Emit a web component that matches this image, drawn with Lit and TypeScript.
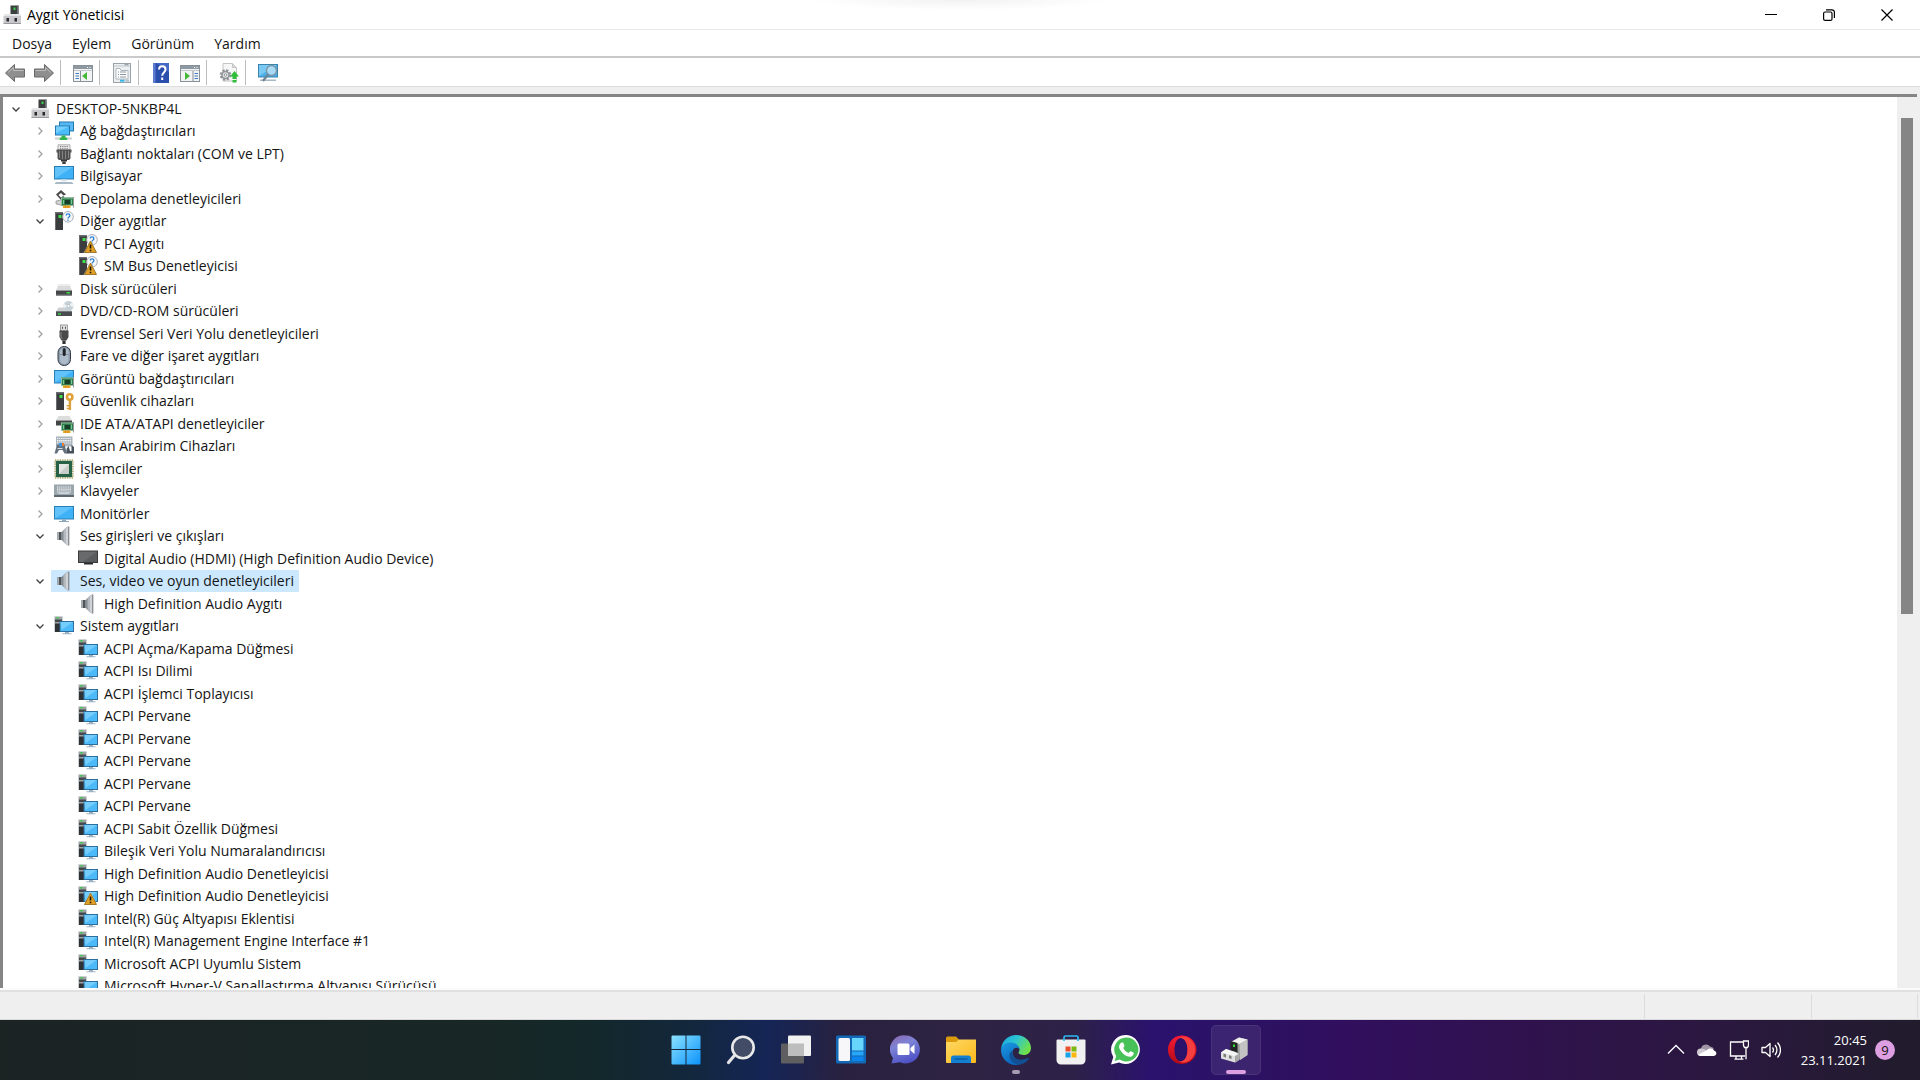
import { LitElement, html, css, svg, nothing, TemplateResult } from "lit";
import { customElement, state } from "lit/decorators.js";
import { classMap } from "lit/directives/class-map.js";

/* ---------- shared icon parts ---------- */

const frame = (body: unknown, size = 20, box = "0 0 20 20") => html`<svg
  width=${size}
  height=${size}
  viewBox=${box}
  aria-hidden="true"
>${body}</svg>`;

const warning = svg`
  <path d="M12.500 6L19.500 19H5.500z" fill="#fff" opacity=".7"/>
  <path d="M12.500 7L18.500 18.500H6.500z" fill="#e0a026" stroke="#8f6412" stroke-width=".8" stroke-linejoin="round"/>
  <path d="M12.500 10.500v4M12.500 15.700v1.600" stroke="#1c1400" stroke-width="1.600"/>`;

const card = svg`
  <rect x="7" y="8.500" width="12" height="8" fill="#2f7d4c"/>
  <path d="M7 8.500h12v1H8v7H7z" fill="#8fc3a0"/>
  <rect x="11" y="11" width="5" height="4" fill="#163d26"/>
  <path d="M9 11h1v4H9zM17 10.500h1v4.500h-1z" fill="#79c796"/>
  <rect x="9" y="16.500" width="7.500" height="2.500" fill="#f0a828"/>
  <path d="M11.500 16.500v2.500M14 16.500v2.500" stroke="#b87410" stroke-width=".6"/>
  <path d="M19.500 8v10.500" stroke="#9a9a9a"/>`;

const tower = svg`
  <rect x="1" y="1" width="8" height="18" fill="#3a3c3e"/>
  <path d="M1 1h8v1.500H2V19H1z" fill="#6a6d70"/>
  <rect x="4.500" y="4" width="3" height="3" fill="#3fe04a"/>`;

const systemDevice = svg`
  <rect x="0.500" y="0.500" width="8" height="15.500" fill="#9da2a5"/>
  <rect x="1" y="3.500" width="7" height="2.500" fill="#45494c"/>
  <rect x="1" y="7.500" width="5" height="8.500" fill="#2f3234"/>
  <rect x="2.500" y="1" width="2" height="1.500" fill="#27d63c"/>
  <rect x="5.500" y="5" width="14.500" height="11" fill="#2d6f9c"/>
  <path d="M6.500 6h12.500v9H6.500z" fill="#4cbaf8"/>
  <path d="M6.500 6h12.500L7.500 14z" fill="#74cdfb"/>
  <path d="M11 16h4v1.300h2.500v1H8.500v-1H11z" fill="#9db2c2"/>`;

const screen = svg`
  <rect x="0" y="1" width="20" height="13.500" fill="#2a7fb5"/>
  <rect x="1" y="2" width="18" height="11.500" fill="#3fb2f7"/>
  <path d="M1 2h18L1 13.500z" fill="#62c3fa"/>`;

const speaker = svg`
  <path d="M3.500 6h4.500v8H3.500z" fill="#4f5459"/>
  <path d="M3.500 6h1.500v8H3.500z" fill="#a4abb1"/>
  <path d="M7 6.500L13.500 0.500v19L7 13.500z" fill="#858c92"/>
  <path d="M9.500 4.200l4-3.700v19l-4-3.700z" fill="#b4babf"/>
  <path d="M12 2l3-1.500v19L12 18z" fill="#d0d4d7"/>
  <path d="M14.300.5h1v19h-1z" fill="#6b7278"/>`;

const hub = svg`
  <rect x="8.500" y="0.500" width="8" height="10" fill="#3b3f3f"/>
  <path d="M15 .5h1.500v10H15z" fill="#6b6f6f"/>
  <rect x="11.500" y="2.500" width="2" height="2.500" fill="#3bd04d"/>
  <path d="M3 9h14.500l1.500 2v8H1.500v-8z" fill="#c9c9cc"/>
  <path d="M3 9h14.500l1.500 2H1.500z" fill="#e6e6e8"/>
  <path d="M1.500 18H19v1H1.500z" fill="#99999d"/>
  <rect x="4.500" y="13" width="2.500" height="3.500" fill="#2a2a2c"/>
  <rect x="12.500" y="13" width="2.500" height="3.500" fill="#2a2a2c"/>`;

const keys = (y: number) => svg`<path d="M3 ${y}h14M3 ${y + 2}h14" stroke="#f5f7f8" stroke-width="1" stroke-dasharray="1.300 .8"/>`;

const other = svg`${tower}
  <circle cx="14" cy="5.800" r="5.300" fill="#f4f6f8" stroke="#a8b0b6"/>
  <path d="M12.200 4.500c0-2.300 3.700-2.300 3.700 0 0 1.400-1.900 1.400-1.900 3M14 8.500v1.300" fill="none" stroke="#2a7fd0" stroke-width="1.300"/>`;

const deviceIcons: Record<string, unknown> = {
  hub,
  network: svg`
    <rect x="5" y="0.500" width="15" height="10" fill="#2277ad"/><rect x="6" y="1.500" width="13" height="8" fill="#56b9f5"/>
    <rect x="1" y="4.500" width="15" height="10" fill="#2277ad"/><rect x="2" y="5.500" width="13" height="8" fill="#4bbcfa"/>
    <path d="M2 5.500h13L2 12z" fill="#74cffc"/>
    <path d="M7.500 14.500h4v2h2v2.500h-8v-2.500h2z" fill="#34b450"/>
    <path d="M1 16.500h4.500v2H1zM13.500 16.500H18v2h-4.500z" fill="#c9d2cc"/>`,
  port: svg`
    <path d="M4 .8h12v5H4z" fill="#ececec" stroke="#9a9a9a" stroke-width=".8"/>
    <path d="M6 2.500h8M6 4.300h8" stroke="#777" stroke-dasharray="1.200 1"/>
    <path d="M2.500 5.500h15v3h-1v6l-1.500 1.500H5l-1.500-1.500v-6h-1z" fill="#505050"/>
    <path d="M5.500 7v7M8.500 7v8M11.500 7v8M14.500 7v7" stroke="#858585" stroke-width="1"/>
    <rect x="7" y="16" width="6" height="1.500" fill="#333"/><rect x="8.300" y="17.500" width="3.400" height="2.500" fill="#3a3a3a"/>`,
  computer: svg`<g transform="translate(0 -1)">${screen}
    <path d="M7 14.500h6v2H7z" fill="#dbe4ea"/><path d="M2 17h16l1.500 2H.5z" fill="#a8b9c7"/></g>`,
  storage: svg`
    <path d="M2 5.500L7 1l5 4.500-2.500 1L7 4 4.500 6 7 8.500l2-1.500 1.500 1L7 11z" fill="#4a4a4a"/>
    <path d="M2 12l5-1 5 3v3l-10-2z" fill="#d0d0d0" stroke="#7b7b7b" stroke-width=".6"/>${card}`,
  other,
  otherWarning: svg`${other}${warning}`,
  disk: svg`
    <path d="M4.500 5.500h11L18 11.500H2z" fill="#dadbdc"/><path d="M4.500 5.500h11l.6 1.500H4z" fill="#ececec"/>
    <rect x="2" y="11.500" width="16" height="5" fill="#454749"/><rect x="2" y="15.500" width="16" height="1" fill="#75787a"/>
    <rect x="12.500" y="13" width="3.500" height="1.500" fill="#36dd45"/>`,
  dvd: svg`
    <path d="M4.500 6.500h11L18 10.500H2z" fill="#cdd0d2"/>
    <circle cx="14.500" cy="5" r="5" fill="#c5d0d7"/><path d="M14.500 5L18 1.500A5 5 0 0 1 19.500 6zM14.500 5L10 7A5 5 0 0 1 10 3z" fill="#eef3f5"/><circle cx="14.500" cy="5" r="1.500" fill="#fff" stroke="#9daab3" stroke-width=".6"/>
    <path d="M2 10h16v5H2z" fill="#4a4d4f"/><path d="M2 10h16v1H2z" fill="#777a7c"/><rect x="4" y="12.300" width="3" height="1.400" fill="#36dd45"/>`,
  usb: svg`
    <rect x="6.500" y="1" width="7" height="6" fill="#dcdcdc" stroke="#8b8b8b" stroke-width=".8"/>
    <path d="M8.500 2.800v2M11.500 2.800v2" stroke="#555"/>
    <path d="M5.500 6.500h9v6.500l-2 3.500h-5l-2-3.500z" fill="#48494b"/><path d="M7 8v5l1 2" stroke="#858688" fill="none"/>
    <rect x="8.400" y="16.500" width="3.200" height="3.500" fill="#333"/>`,
  mouse: svg`
    <rect x="4" y="0.500" width="12.500" height="19" rx="6" fill="#8d9dad" stroke="#333a42"/>
    <rect x="6" y="2" width="8.500" height="16" rx="4.200" fill="#aebcc9"/>
    <path d="M6 8.500h8.500" stroke="#6e7d8b" stroke-width=".7"/>
    <rect x="8.700" y="2" width="3" height="8" rx="1.500" fill="#1e2328"/>`,
  display: svg`${screen}${card}`,
  security: svg`
    <g transform="translate(1 0)">${tower}</g>
    <circle cx="15.700" cy="6" r="2.700" fill="none" stroke="#dfa23b" stroke-width="2.600"/>
    <path d="M14.700 9h2.400v10h-2.400zM12.700 14h2v1.500h-2zM12.700 16.800h2v1.500h-2z" fill="#dba03c"/>`,
  ide: svg`
    <path d="M4.500 2h11L18 6.500H2z" fill="#dcdddd"/><rect x="2" y="6.500" width="16" height="5" fill="#434547"/>${card}`,
  hid: svg`
    <rect x="2" y="0.500" width="16.500" height="10" fill="#a9b4bc"/>${keys(2.5)}${keys(5)}
    <path d="M3 8.500h7.500l2.500 9h-2.500l-2-3.500H5L3 17.500H.5z" fill="#64707c"/>
    <rect x="5" y="7" width="3" height="3.500" fill="#3f93e0"/><path d="M8 7h2v3H8z" fill="#f07b24"/>
    <path d="M12.500 17.500V13l2-3 1.500 5h1.500V9l2.500 2v6.500h-5z" fill="#46515c"/>
    <path d="M3.500 12.500h5" stroke="#d9dfe4"/>`,
  cpu: svg`
    <rect x="1" y="1" width="18" height="18" fill="none" stroke="#b3a35c" stroke-width="1.500" stroke-dasharray="1.200 1.200"/>
    <rect x="1.800" y="1.800" width="16.400" height="16.400" fill="#286246"/>
    <rect x="5" y="5" width="10" height="10" fill="#e3e6e4"/><path d="M5 15L15 5v10z" fill="#c8cdca"/>`,
  keyboard: svg`
    <rect x="0" y="3.500" width="20" height="12.500" fill="#9aa5ac"/><rect x="0" y="14" width="20" height="2" fill="#5d6870"/>
    ${keys(6)}${keys(9)}<path d="M4.500 12.200h11" stroke="#e7ebed"/>`,
  monitor: svg`<g transform="translate(0 1)">${screen}<path d="M8 14.500h4V16h3v1H5v-1h3z" fill="#8ea7b9"/></g>`,
  speaker,
  darkMonitor: svg`
    <rect x="0" y="1.500" width="20" height="12.500" fill="#38393a"/><rect x="1" y="2.500" width="18" height="10.500" fill="#686a6b"/>
    <path d="M19 2.500V13H5z" fill="#595b5c"/><path d="M6 14h9v1.500H6z" fill="#2a2a2a"/>`,
  system: systemDevice,
  systemWarning: svg`${systemDevice}${warning}`,
};

/* ---------- toolbar icons ---------- */

const panelWindow = svg`
  <rect x="0.500" y="2.500" width="19" height="16" fill="#f3f3f3" stroke="#87929b"/>
  <rect x="1" y="3" width="18" height="3" fill="#8d98a1"/><path d="M14 4.500h1M16.500 4.500h1" stroke="#fff"/>
  <path d="M1 7.500h18" stroke="#c3cacf"/>`;

const arrow = svg`
  <path d="M.5 10L9.500 1.500V6H19.500v8H9.500v4.500z" fill="#8f8f8f" stroke="#696969" stroke-linejoin="round"/>
  <path d="M3 9.500l5.500-5V7.500H18.500" fill="none" stroke="#bdbdbd"/>`;

const toolbarIcons: Record<string, unknown> = {
  back: arrow,
  forward: svg`<g transform="matrix(-1 0 0 1 20 0)">${arrow}</g>`,
  tree: svg`${panelWindow}
    <path d="M7.500 8v10" stroke="#87929b"/><path d="M2.500 10.500h3.500M2.500 13h3.500M2.500 15.500h3.500" stroke="#3c7fc0"/>
    <path d="M14 9v8l-5-4z" fill="#46b83a"/>`,
  properties: svg`
    <rect x="1.500" y="0.500" width="17" height="19" fill="#eceff1" stroke="#9aa3aa"/>
    <path d="M2 3h16" stroke="#c1c7cc"/><path d="M12.500 1.800h4" stroke="#7e8991"/>
    <path d="M4 5.500h4l1 2h7v8.500H4z" fill="#fff" stroke="#a6afb5" stroke-width=".9"/>
    <path d="M6 9h1M8 9h6M6 11.500h1M8 11.500h6M6 14h1M8 14h6" stroke="#8896a3"/>
    <rect x="8" y="16.700" width="4.500" height="2" fill="#35b9e8"/><rect x="13.500" y="16.700" width="3.500" height="2" fill="#b8c1c7"/>`,
  help: svg`
    <rect x="2" y="0" width="16" height="20" fill="#2c4fae"/><rect x="2" y="0" width="2.500" height="20" fill="#5d7cd0"/>
    <path d="M5 0h13v9z" fill="#4569c6"/>
    <path d="M8 6.500c0-4.500 6.500-4.500 6.500 0 0 3-3.300 3-3.300 6.300M11.200 14.500v2.500" fill="none" stroke="#fff" stroke-width="2"/>`,
  action: svg`${panelWindow}
    <path d="M13 8v10" stroke="#87929b"/><path d="M14.500 10.500H18M14.500 13H18M14.500 15.500H18" stroke="#3c7fc0"/>
    <path d="M5 9v8l5-4z" fill="#46b83a"/>`,
  update: svg`
    <path d="M4 .5h9.500l4 4V18H4z" fill="#f6f6f6" stroke="#c4c4c4"/><path d="M13.500.5v4h4" fill="#dadada" stroke="#c4c4c4"/>
    <circle cx="6.500" cy="12" r="4.700" fill="none" stroke="#8f9498" stroke-width="2.200" stroke-dasharray="2.200 1.500"/>
    <circle cx="6.500" cy="12" r="3.500" fill="#e5e6e7" stroke="#8f9498" stroke-width="1.500"/><circle cx="6.500" cy="12" r="1.300" fill="#fff" stroke="#8f9498"/>
    <path d="M15.500 8l4.500 5.500h-2.500V16h-4v-2.500H11z" fill="#2fbf3a"/><path d="M13.500 17h4v2.500h-4z" fill="#2fbf3a"/>`,
  scan: svg`
    <rect x="0.500" y="1.500" width="19" height="12.500" fill="#49b0ea" stroke="#3c84ae"/><path d="M1 2h18L1 13z" fill="#79c9f3"/>
    <path d="M2 16.500h16v1.500H2z" fill="#aab8c2"/>
    <circle cx="13.500" cy="7.500" r="5" fill="#b9e2f8" fill-opacity=".85" stroke="#7a93a4" stroke-width="1.300"/>
    <path d="M10 11.500L5 18" stroke="#6c8496" stroke-width="2.200"/>`,
};

/* ---------- taskbar icons, 32 x 32 ---------- */

const taskIcons: Record<string, unknown> = {
  start: svg`
    <defs><linearGradient id="st" x1="0" y1="0" x2="1" y2="1"><stop offset="0" stop-color="#8be2ff"/><stop offset="1" stop-color="#0c93fb"/></linearGradient></defs>
    <path d="M2.500 1.500h13v13.500H1.500v-12.500a1 1 0 0 1 1-1zM16.500 1.500h13a1 1 0 0 1 1 1V15H16.500zM1.500 16h14v14.500h-13a1 1 0 0 1-1-1zM16.500 16h14v13.500a1 1 0 0 1-1 1h-13z" fill="url(#st)"/>`,
  search: svg`
    <path d="M9 22L3.500 28.500" stroke="#e4e4e6" stroke-width="3.200" stroke-linecap="round"/>
    <circle cx="18" cy="13.500" r="10.700" fill="#434c66" stroke="#e9e9ea" stroke-width="2.600"/>`,
  taskView: svg`
    <rect x="1" y="9.500" width="23" height="20" rx="1" fill="#5f5f62"/>
    <rect x="8" y="1.500" width="23" height="20.500" rx="1" fill="#f2f2f2"/>
    <path d="M8 9.500h16V22H8z" fill="#bdbdbd"/>`,
  widgets: svg`
    <rect x="1" y="1.500" width="30" height="28" rx="1.500" fill="#1469b6"/>
    <rect x="3.500" y="4" width="11.500" height="23" rx="1.500" fill="#f7f7f9"/>
    <path d="M17 4h11.500v12.500H17z" fill="#68d5fd"/><path d="M17 17.500h11.500v4H17z" fill="#27a7f7"/><path d="M17 22.500h11.500V27H17z" fill="#0b84ec"/>`,
  chat: svg`
    <defs><linearGradient id="ch" x1="0.200" y1="0" x2="0.600" y2="1"><stop offset="0" stop-color="#8c6bb4"/><stop offset=".35" stop-color="#7d83d6"/><stop offset="1" stop-color="#4c4fc4"/></linearGradient></defs>
    <path d="M16 1.500a14 14 0 1 1-6 26.700L1.500 29.500 3 24A14 14 0 0 1 16 1.500z" fill="url(#ch)"/>
    <rect x="7.500" y="9.500" width="12" height="11.500" rx="1.500" fill="#fff"/><path d="M20.500 14l4-3.500v9.500l-4-3.500z" fill="#fff"/>`,
  explorer: svg`
    <defs><linearGradient id="ex" x1="0" y1="0" x2="1" y2="1"><stop offset="0" stop-color="#ffd964"/><stop offset="1" stop-color="#fbb81c"/></linearGradient></defs>
    <path d="M1 4a1.500 1.500 0 0 1 1.500-1.500H11l3 3V12H1z" fill="#dc9b0d"/>
    <path d="M1 8h10l3-2.500h17V28a1 1 0 0 1-1 1H2a1 1 0 0 1-1-1z" fill="url(#ex)"/>
    <path d="M6 29v-5a2.500 2.500 0 0 1 2.500-2.500h15A2.500 2.500 0 0 1 26 24v5z" fill="#1480d3"/><path d="M9.500 25h13" stroke="#0b5694" stroke-width="1.200"/>`,
  edge: svg`
    <defs>
      <linearGradient id="e1" x1="0" y1="0" x2="1" y2=".5"><stop offset="0" stop-color="#1aa3e4"/><stop offset=".5" stop-color="#2cc5d0"/><stop offset="1" stop-color="#6fe04c"/></linearGradient>
      <linearGradient id="e2" x1="0" y1="0" x2=".5" y2="1"><stop offset="0" stop-color="#1a9be4"/><stop offset="1" stop-color="#0b62b8"/></linearGradient>
    </defs>
    <path d="M1.200 14.500C2 6.500 8.500 1 16 1c8.500 0 15 6 15 13 0 4.500-3.500 7-7 7-3.500 0-5.500-1-5.500-2.200 0-.8 1-1.300 1-3.300 0-2.600-2.700-5-6.500-5-5 0-9.800 1.500-11.800 4z" fill="url(#e1)"/>
    <path d="M1 16c0-4.500 4.500-7.500 9.500-7.500 5.200 0 9 3.200 9 7-1-2.500-6-2.500-6.800 1.500-1 6 5 11 10.800 10.500C21 30 18 31 15.500 31 7.500 31 1 24 1 16z" fill="url(#e2)"/>
    <path d="M12.700 16.500c-1.700 6.500 4.500 12 15.300 7.500.8-.3 1.200.2.700.9-2.200 3.300-5.700 5.200-9.200 5.800C12.500 30 9 25.500 9.500 21c.3-2.200 1.500-3.700 3.200-4.500z" fill="#124f93"/>`,
  store: svg`
    <path d="M1.500 6.500a1 1 0 0 1 1-1h27a1 1 0 0 1 1 1V26a4.500 4.500 0 0 1-4.500 4.500H6A4.500 4.500 0 0 1 1.500 26z" fill="#f1f1f2"/>
    <path d="M9 7V3.500A1.500 1.500 0 0 1 10.500 2h11A1.500 1.500 0 0 1 23 3.500V7" fill="none" stroke="#2cb8f0" stroke-width="1.700"/>
    <path d="M10.500 12.500h5v5h-5z" fill="#e8502b"/><path d="M16.500 12.500h5v5h-5z" fill="#7eb812"/><path d="M10.500 18.500h5v5h-5z" fill="#17a2ea"/><path d="M16.500 18.500h5v5h-5z" fill="#fbb80f"/>`,
  whatsapp: svg`
    <path d="M16.500 1A14.500 14.500 0 1 1 9 28.500L1 30.500l2.300-7.500A14.500 14.500 0 0 1 16.500 1z" fill="#fff"/>
    <path d="M16.500 3.500A12 12 0 1 1 9.800 25.500L4.700 27l1.500-5A12 12 0 0 1 16.500 3.500z" fill="#48c258"/>
    <path d="M12.300 8.500c.5 0 .9 0 1.200.8l1 2.500c.2.600-1.200 1.700-1.200 2.200.8 2.200 2.800 4 5.200 4.900.7-.1 1.500-1.800 2.200-1.600l2.700 1.300c1 .5-.2 3.600-2.400 4.100-2 .5-5.500-.8-8-3.200s-4.200-5-3.900-7.200c.2-1.900 1.400-3.800 3.200-3.800z" fill="#fff"/>`,
  opera: svg`
    <defs><linearGradient id="op" x1="0" y1="0" x2="0" y2="1"><stop offset="0" stop-color="#fb1b34"/><stop offset="1" stop-color="#b00a17"/></linearGradient></defs>
    <path fill-rule="evenodd" d="M16 1.500A14.300 14.300 0 1 1 16 30a14.300 14.300 0 0 1 0-28.500zM16 4c-4 0-6.500 5-6.500 11.800S12 27.500 16 27.500s6.500-5 6.500-11.700S20 4 16 4z" fill="url(#op)"/>
    <path d="M14 4.300C17 1.500 23 3 26.500 6.500c5 5.500 5 13 0 18.500-3.500 3.500-9.500 5-12.500 2.200 5 1.300 8.500-4.200 8.500-11.400S19 3 14 4.300z" fill="#f6403f"/>`,
  devices: svg`
    <path d="M11 8l8-4.500 8.500 2V21L20 26l-9-4z" fill="#9b9b9b"/><path d="M11 8l8-4.500 8.500 2L19.500 10z" fill="#f0f0f0"/><path d="M19.500 10l8-4.500V21L20 26z" fill="#c3c3c3"/>
    <path d="M10.500 7l7 2v10.500l-7-3z" fill="#202322"/><rect x="13" y="10.500" width="2" height="2.500" fill="#36dc4c"/>
    <path d="M1 18.500l5-3.500 10 3 2.500 2v6.500L15 28.500 1 24.500z" fill="#dfdfdf"/><path d="M1 18.500l5-3.500 12.500 5-3.500 2z" fill="#f5f5f5"/><path d="M15 22l3.500-2v6.500L15 28.500z" fill="#a6a6a6"/>
    <path d="M3.500 19.500l2.500.8v3.200l-2.500-.8zM9 21.200l2.500.8v3l-2.500-.8z" fill="#7c7c7c"/>`,
};

/* ---------- data ---------- */

interface DeviceNode {
  name: string;
  icon: string;
  children?: DeviceNode[];
  open?: boolean;
}

const sys = (name: string, icon = "system"): DeviceNode => ({ name, icon });
const group = (name: string, icon: string): DeviceNode => ({ name, icon, children: [] });

const root: DeviceNode = {
  name: "DESKTOP-5NKBP4L",
  icon: "hub",
  open: true,
  children: [
    group("Ağ bağdaştırıcıları", "network"),
    group("Bağlantı noktaları (COM ve LPT)", "port"),
    group("Bilgisayar", "computer"),
    group("Depolama denetleyicileri", "storage"),
    {
      name: "Diğer aygıtlar",
      icon: "other",
      open: true,
      children: [sys("PCI Aygıtı", "otherWarning"), sys("SM Bus Denetleyicisi", "otherWarning")],
    },
    group("Disk sürücüleri", "disk"),
    group("DVD/CD-ROM sürücüleri", "dvd"),
    group("Evrensel Seri Veri Yolu denetleyicileri", "usb"),
    group("Fare ve diğer işaret aygıtları", "mouse"),
    group("Görüntü bağdaştırıcıları", "display"),
    group("Güvenlik cihazları", "security"),
    group("IDE ATA/ATAPI denetleyiciler", "ide"),
    group("İnsan Arabirim Cihazları", "hid"),
    group("İşlemciler", "cpu"),
    group("Klavyeler", "keyboard"),
    group("Monitörler", "monitor"),
    {
      name: "Ses girişleri ve çıkışları",
      icon: "speaker",
      open: true,
      children: [sys("Digital Audio (HDMI) (High Definition Audio Device)", "darkMonitor")],
    },
    {
      name: "Ses, video ve oyun denetleyicileri",
      icon: "speaker",
      open: true,
      children: [sys("High Definition Audio Aygıtı", "speaker")],
    },
    {
      name: "Sistem aygıtları",
      icon: "system",
      open: true,
      children: [
        sys("ACPI Açma/Kapama Düğmesi"),
        sys("ACPI Isı Dilimi"),
        sys("ACPI İşlemci Toplayıcısı"),
        sys("ACPI Pervane"),
        sys("ACPI Pervane"),
        sys("ACPI Pervane"),
        sys("ACPI Pervane"),
        sys("ACPI Pervane"),
        sys("ACPI Sabit Özellik Düğmesi"),
        sys("Bileşik Veri Yolu Numaralandırıcısı"),
        sys("High Definition Audio Denetleyicisi"),
        sys("High Definition Audio Denetleyicisi", "systemWarning"),
        sys("Intel(R) Güç Altyapısı Eklentisi"),
        sys("Intel(R) Management Engine Interface #1"),
        sys("Microsoft ACPI Uyumlu Sistem"),
        sys("Microsoft Hyper-V Sanallaştırma Altyapısı Sürücüsü"),
      ],
    },
  ],
};

/* ---------- device tree ---------- */

@customElement("device-tree")
class DeviceTree extends LitElement {
  @state() private selected: DeviceNode = root.children![17];

  static styles = css`
    :host { display: flex; min-height: 0; overflow: hidden; background: #fff; }
    svg { display: block; flex: none; }
    .list { flex: 1; min-width: 0; margin: 0; padding: 0; list-style: none; overflow: hidden; }
    .row { display: flex; align-items: center; height: 22px; padding-left: 1px; }
    .row:nth-child(odd) { height: 23px; }
    .level-1 { padding-left: 25px; }
    .level-2 { padding-left: 49px; }
    button { border: 0; background: none; font: inherit; color: inherit; padding: 0; }
    .toggle { display: grid; place-items: center; width: 23px; height: 22px; flex: none; }
    .spacer { width: 23px; flex: none; }
    .item { display: flex; align-items: center; gap: 6px; height: 22px; padding: 0 5px 0 3px; white-space: nowrap; border-radius: 1px; }
    .selected { background: #cce8ff; }
    .scrollbar { display: flex; flex-direction: column; align-items: center; width: 20px; flex: none; background: #efefef; padding-top: 21px; box-sizing: border-box; }
    .thumb { width: 12px; height: 57%; background: #858585; }
  `;

  private toggle(node: DeviceNode) {
    node.open = !node.open;
    this.requestUpdate();
  }

  private rows(node: DeviceNode, level: number): TemplateResult[] {
    const chevron = node.open
      ? svg`<path d="M2.500 4.500L6 8l3.500-3.500" fill="none" stroke="#404040" stroke-width="1.300"/>`
      : svg`<path d="M4.500 2.500L8 6 4.500 9.500" fill="none" stroke="#a0a0a0" stroke-width="1.300"/>`;
    const row = html`<li class="row level-${level}" role="treeitem" aria-level=${level + 1}
      aria-expanded=${node.children ? String(!!node.open) : nothing}>
      ${node.children
        ? html`<button class="toggle" aria-label=${node.name} @click=${() => this.toggle(node)}>${frame(chevron, 12, "0 0 12 12")}</button>`
        : html`<span class="spacer"></span>`}
      <button class=${classMap({ item: true, selected: node === this.selected })} @click=${() => (this.selected = node)}>
        ${frame(deviceIcons[node.icon])}<span>${node.name}</span>
      </button>
    </li>`;
    const below = node.open ? (node.children ?? []).flatMap((c) => this.rows(c, level + 1)) : [];
    return [row, ...below];
  }

  render() {
    return html`<ul class="list" role="tree">${this.rows(root, 0)}</ul>
      <div class="scrollbar"><div class="thumb"></div></div>`;
  }
}

/* ---------- taskbar ---------- */

@customElement("task-bar")
class TaskBar extends LitElement {
  static styles = css`
    :host {
      display: grid; grid-template-columns: 1fr auto 1fr; align-items: center; height: 60px; color: #fff;
      background: linear-gradient(92deg, #1b2323 0%, #182725 25%, #13282b 31%, #13273d 36%, #152556 40%, #29213f 44%,
        #2e2342 50%, #2d2148 56%, #2a126e 60%, #2c1263 65%, #310f5e 70%, #2f124c 80%, #2a183e 90%, #211c2c 100%);
    }
    svg { display: block; }
    button { border: 0; background: none; font: inherit; color: inherit; padding: 0; }
    .apps { grid-column: 2; display: flex; gap: 5px; padding-left: 1px; }
    .app { display: grid; place-items: center; position: relative; width: 50px; height: 50px; border-radius: 5px; box-sizing: border-box; }
    .active { background: #ffffff14; border: 1px solid #ffffff12; }
    .mark { position: absolute; bottom: 1px; left: 50%; transform: translateX(-50%); width: 8px; height: 4px; border-radius: 2px; background: #a79cb4; }
    .active .mark { width: 20px; bottom: 0; background: #dd9ee2; }
    .tray { display: flex; align-items: center; justify-content: flex-end; padding-right: 25px; }
    .tool { display: grid; place-items: center; width: 32px; height: 40px; }
    .clock { display: grid; text-align: right; font-size: 13px; line-height: 20px; margin: 0 8px 0 14px; }
    .badge { display: grid; place-items: center; width: 20px; height: 20px; border-radius: 50%; background: #dd9ee2; color: #111; font-size: 13px; line-height: 20px; }
  `;

  private apps: [string, string, string][] = [
    ["start", "Başlat", ""],
    ["search", "Ara", ""],
    ["taskView", "Görev Görünümü", ""],
    ["widgets", "Pencere öğeleri", ""],
    ["chat", "Sohbet", ""],
    ["explorer", "Dosya Gezgini", ""],
    ["edge", "Microsoft Edge", "running"],
    ["store", "Microsoft Store", ""],
    ["whatsapp", "WhatsApp", ""],
    ["opera", "Opera", ""],
    ["devices", "Aygıt Yöneticisi", "active"],
  ];

  render() {
    return html`
      <nav class="apps">
        ${this.apps.map(
          ([icon, label, status]) => html`<button class="app ${status}" aria-label=${label}>
            ${frame(taskIcons[icon], 32, "0 0 32 32")}${status ? html`<span class="mark"></span>` : nothing}
          </button>`
        )}
      </nav>
      <div class="tray">
        <button class="tool" aria-label="Gizli simgeler">${frame(svg`<path d="M3 13.500l8-8 8 8" fill="none" stroke="#fff" stroke-width="1.300"/>`)}</button>
        <button class="tool" aria-label="OneDrive">${frame(svg`
          <path d="M4 9a5 5 0 0 1 9-2.500A5 5 0 0 1 17 9l-8 3z" fill="#9e95a6"/>
          <path d="M3 16a3.800 3.800 0 0 1 .5-7.500c2 0 4 .5 6 2L2 16z" fill="#cfcad4"/>
          <path d="M1 15l9-5c3-2.500 6-1.500 7 .5 3.500 1 3 5.500-.5 5.500H3z" fill="#fff"/>`)}</button>
        <button class="tool" aria-label="Ağ">${frame(svg`
          <path d="M14 2H1.500v14H16M5.500 19.200h9M7 16v3M12.500 16v3" fill="none" stroke="#fff" stroke-width="1.300"/>
          <path d="M14.500 1h5v4.500l-1 2h-3l-1-2zM17 7.500v11.700" fill="#2a183e" stroke="#fff" stroke-width="1.300"/>`)}</button>
        <button class="tool" aria-label="Ses">${frame(svg`
          <path d="M1 7.500h3.500L9 3.500v13l-4.500-4H1z" fill="none" stroke="#fff" stroke-width="1.300" stroke-linejoin="round"/>
          <path d="M11.500 7.500a4 4 0 0 1 0 5M14 5a7.500 7.500 0 0 1 0 10M16.500 2.500a11 11 0 0 1 0 15" fill="none" stroke="#fff" stroke-width="1.300"/>`)}</button>
        <div class="clock"><span>20:45</span><span>23.11.2021</span></div>
        <span class="badge">9</span>
      </div>`;
  }
}

/* ---------- window ---------- */

@customElement("app-root")
class AppRoot extends LitElement {
  static styles = css`
    :host {
      display: flex; flex-direction: column; height: 100vh; overflow: hidden; background: #efefef; color: #141414;
      font-family: "Open Sans", "Noto Sans", sans-serif; font-size: 14px; line-height: 20px; cursor: default;
    }
    svg { display: block; flex: none; }
    button { border: 0; background: none; font: inherit; color: inherit; padding: 0; }
    .titlebar {
      display: flex; align-items: center; height: 29px; padding: 0 4px 0 2px; border-bottom: 1px solid #e9e9e9;
      background: radial-gradient(ellipse 150px 10px at 50% 0, #f2f2f2 0%, #fff 100%) #fff;
    }
    .title { flex: 1; margin: 0 0 0 5px; font-size: 14px; font-weight: 400; color: #000; }
    .caption { display: grid; place-items: center; width: 58px; height: 29px; }
    .menu { display: flex; align-items: center; height: 25px; padding: 1px 0 0 2px; background: #fff; border-bottom: 2px solid #c9c9cb; }
    .menu-item { padding: 0 10px; }
    .toolbar { display: flex; align-items: center; height: 27px; padding-top: 1px; background: #fff; border-bottom: 1px solid #dcdcdc; }
    .tool { display: grid; place-items: center; width: 29px; height: 27px; }
    .rule { width: 1px; height: 25px; margin: 0 7px 0 2px; background: #bdbdbd; }
    .tree { flex: 1; margin: 7px 3px 0 0; border: solid #858585; border-width: 3px 0 0 3px; }
    .status { display: flex; height: 26px; border-top: 2px solid #e0e0e0; outline: 2px solid #fbfbfb; margin-top: 2px; padding: 0 2px 1px 0; border-bottom: 1px solid #d9d9d9; }
    .cell { box-sizing: border-box; border-right: 1px solid #dcdcdc; margin-top: 2px; }
    .wide { flex: 1; }
    .middle { width: 167px; }
    .narrow { width: 106px; }
  `;

  private groups = [
    [["back", "Geri"], ["forward", "İleri"]],
    [["tree", "Konsol ağacı"]],
    [["properties", "Özellikler"]],
    [["help", "Yardım"], ["action", "Eylem bölmesi"]],
    [["update", "Sürücüyü güncelleştir"]],
    [["scan", "Donanım değişikliklerini tara"]],
  ];

  render() {
    return html`
      <header class="titlebar">
        ${frame(hub)}
        <h1 class="title">Aygıt Yöneticisi</h1>
        <button class="caption" aria-label="Simge durumuna küçült">${frame(svg`<path d="M0 5.500h12" stroke="#000"/>`, 12, "0 0 12 12")}</button>
        <button class="caption" aria-label="Önceki boyut">${frame(svg`<rect x=".6" y="3" width="8.400" height="8.400" rx="1.500" fill="none" stroke="#000" stroke-width="1.200"/><path d="M3 .8h6a2.400 2.400 0 0 1 2.400 2.400V9" fill="none" stroke="#000" stroke-width="1.200"/>`, 12, "0 0 12 12")}</button>
        <button class="caption" aria-label="Kapat">${frame(svg`<path d="M.5.5l11 11M11.500.5l-11 11" stroke="#000" stroke-width="1.200"/>`, 12, "0 0 12 12")}</button>
      </header>
      <nav class="menu">
        ${["Dosya", "Eylem", "Görünüm", "Yardım"].map((m) => html`<button class="menu-item">${m}</button>`)}
      </nav>
      <div class="toolbar" role="toolbar">
        ${this.groups.map(
          (g, i) => html`${i ? html`<span class="rule"></span>` : nothing}${g.map(
            ([icon, label]) => html`<button class="tool" aria-label=${label}>${frame(toolbarIcons[icon])}</button>`
          )}`
        )}
      </div>
      <device-tree class="tree"></device-tree>
      <footer class="status"><div class="cell wide"></div><div class="cell middle"></div><div class="cell narrow"></div></footer>
      <task-bar></task-bar>`;
  }
}
